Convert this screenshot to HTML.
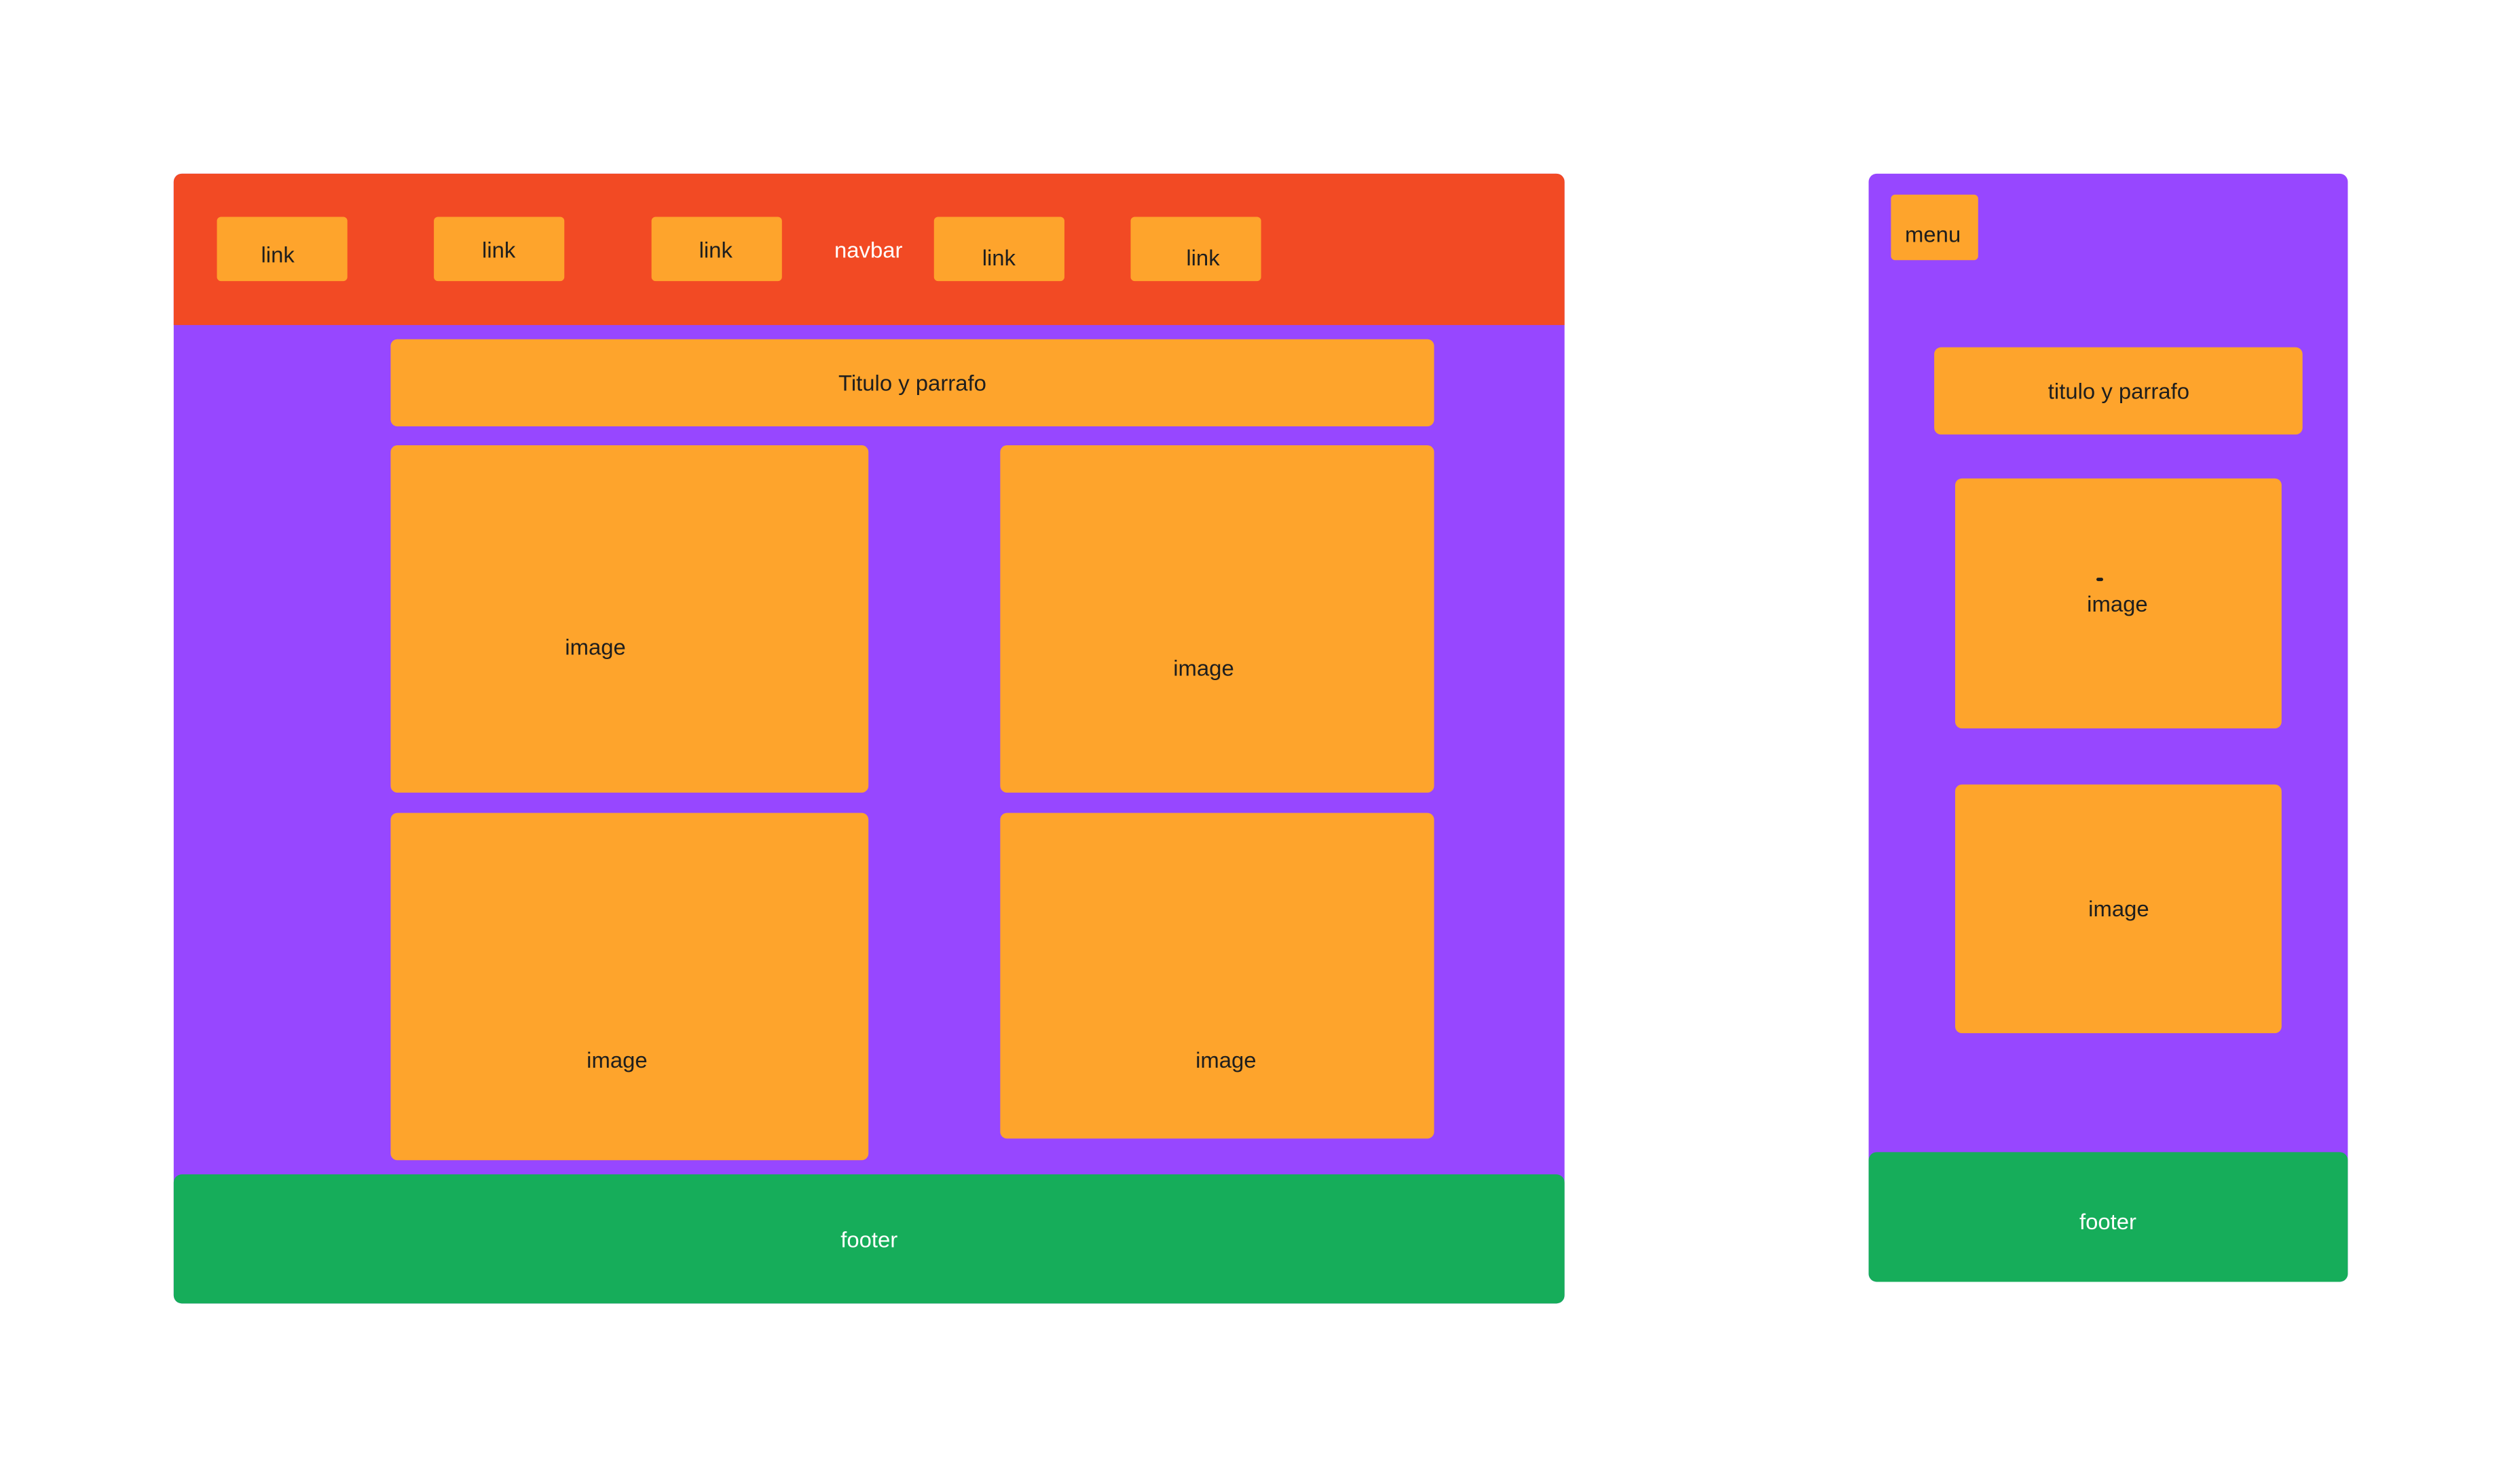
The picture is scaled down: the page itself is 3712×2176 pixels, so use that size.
<!DOCTYPE html>
<html><head><meta charset="utf-8"><style>
html,body{margin:0;padding:0;background:#fff;width:3712px;height:2176px;overflow:hidden;position:relative;font-family:"Liberation Sans",sans-serif;}
#c{position:absolute;left:0;top:0;width:3712px;height:2176px;transform:scale(0.9955);transform-origin:0 0;}
div{position:absolute;box-sizing:border-box;}
.o{background:#FEA42C;border-radius:10px;}
.t{position:absolute;font-size:33px;color:#1e1e1e;transform:translate(-50%,-50%);white-space:nowrap;}
.w{color:#fff;}
</style></head><body><div id="c">
<div style="left:257px;top:257px;width:2058px;height:1672px;background:#9747FF;border-radius:12px;"></div>
<div style="left:257px;top:257px;width:2058px;height:224px;background:#F24A24;border-radius:12px 12px 0 0;"></div>
<div class="o" style="left:321px;top:321px;width:193px;height:95px;border-radius:6px"></div>
<div class="o" style="left:642px;top:321px;width:193px;height:95px;border-radius:6px"></div>
<div class="o" style="left:964px;top:321px;width:193px;height:95px;border-radius:6px"></div>
<div class="o" style="left:1382px;top:321px;width:193px;height:95px;border-radius:6px"></div>
<div class="o" style="left:1673px;top:321px;width:193px;height:95px;border-radius:6px"></div>
<span class="t" style="left:411px;top:377px">link</span>
<span class="t" style="left:738px;top:370px">link</span>
<span class="t" style="left:1059px;top:370px">link</span>
<span class="t w" style="left:1285px;top:370px">navbar</span>
<span class="t" style="left:1478px;top:382px">link</span>
<span class="t" style="left:1780px;top:382px">link</span>
<div class="o" style="left:578px;top:502px;width:1544px;height:129px"></div>
<span class="t" style="left:1350px;top:567px">Titulo y parrafo</span>
<div class="o" style="left:578px;top:659px;width:707px;height:514px"></div>
<span class="t" style="left:881px;top:958px">image</span>
<div class="o" style="left:1480px;top:659px;width:642px;height:514px"></div>
<span class="t" style="left:1781px;top:989px">image</span>
<div class="o" style="left:578px;top:1203px;width:707px;height:514px"></div>
<span class="t" style="left:913px;top:1569px">image</span>
<div class="o" style="left:1480px;top:1203px;width:642px;height:482px"></div>
<span class="t" style="left:1814px;top:1569px">image</span>
<div style="left:257px;top:1738px;width:2058px;height:191px;background:#16AD5A;border-radius:12px;"></div>
<span class="t w" style="left:1286px;top:1835px">footer</span>
<div style="left:2765px;top:257px;width:709px;height:1640px;background:#9747FF;border-radius:12px;"></div>
<div class="o" style="left:2798px;top:288px;width:129px;height:97px;border-radius:6px"></div>
<span class="t" style="left:2860px;top:347px">menu</span>
<div class="o" style="left:2862px;top:514px;width:545px;height:129px"></div>
<span class="t" style="left:3135px;top:579px">titulo y parrafo</span>
<div class="o" style="left:2893px;top:708px;width:483px;height:370px"></div>
<div style="left:3102px;top:855px;width:10px;height:5px;background:#1e1e1e;border-radius:3px"></div>
<span class="t" style="left:3133px;top:894px">image</span>
<div class="o" style="left:2893px;top:1161px;width:483px;height:368px"></div>
<span class="t" style="left:3135px;top:1345px">image</span>
<div style="left:2765px;top:1705px;width:709px;height:192px;background:#16AD5A;border-radius:12px;"></div>
<span class="t w" style="left:3119px;top:1808px">footer</span>
</div></body></html>
